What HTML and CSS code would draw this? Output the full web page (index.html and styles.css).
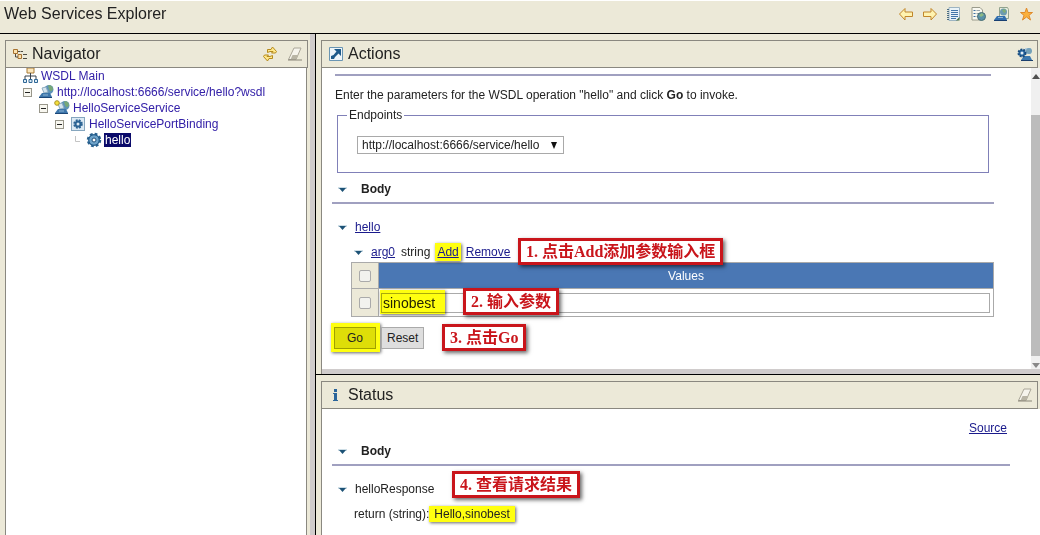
FILE: index.html
```html
<!DOCTYPE html>
<html lang="en">

<head>
    <meta charset="UTF-8">
    <meta name="viewport" content="width=device-width, initial-scale=1.0">
    <title>Web Services Explorer</title>
    <link rel="stylesheet" href="styles.css">
</head>

<body>

    <!-- Shared icons -->
    <svg class="sprite" aria-hidden="true">
        <symbol id="icon-eraser" viewBox="0 0 16 16">
            <path d="M1.500 13.500L7 2h7L9 13.500z" fill="#f6f4ec" stroke="#aaa698" />
            <path d="M5.500 9H11l-2 4.500H3.500z" fill="#b9b5a5" />
            <path d="M1 14h14" fill="none" stroke="#8a8678" />
        </symbol>
        <symbol id="icon-twisty" viewBox="0 0 9 6">
            <path d="M0 1h9" stroke="#9dbccd" />
            <path d="M1 1h7L4.500 5z" fill="#1d5276" />
        </symbol>
        <symbol id="icon-minus" viewBox="0 0 9 9">
            <rect x=".5" y=".5" width="8" height="8" fill="#f8f7f0" stroke="#98968a" />
            <path d="M2 4.500h5" stroke="#222" />
        </symbol>
        <symbol id="icon-gear" viewBox="0 0 16 16">
            <circle cx="8" cy="8" r="6" fill="#4b86b4" stroke="#28618f" stroke-width="2.500" stroke-dasharray="2.700 2" />
            <circle cx="8" cy="8" r="5.200" fill="#6ea3ca" stroke="#245b88" />
            <circle cx="8" cy="8" r="2" fill="#fff" stroke="#1f4f78" />
        </symbol>
        <symbol id="icon-service" viewBox="0 0 16 16">
            <circle cx="11" cy="5.500" r="4.500" fill="#5e93b8" />
            <path d="M10 1.500c3-1 5 1 5 4l-2 2-2-2z" fill="#77a878" />
            <path d="M4 4l4-1 2 5-4 1z" fill="#d5e5ef" stroke="#8fadc0" />
            <path d="M1 13l3-4h8l2 4z" fill="#3d76ab" />
            <path d="M1 13.500h13" stroke="#1c4778" />
            <path d="M5 11h5" stroke="#8fb6d4" />
        </symbol>
    </svg>

    <!-- Toolbar -->
    <header class="toolbar">
        <h1>Web Services Explorer</h1>
        <nav class="toolbar-icons">
            <button type="button" aria-label="Back">
                <svg viewBox="0 0 16 16"><path d="M1.500 8L7 2.500V6h7.500v4.500H7V14z" fill="#fff3b0" stroke="#c1862b" /></svg>
            </button>
            <button type="button" aria-label="Forward">
                <svg viewBox="0 0 16 16"><path d="M14.500 8L9 2.500V6H1.500v4.500H9V14z" fill="#fff3b0" stroke="#c1862b" /></svg>
            </button>
            <button type="button" aria-label="UDDI Page">
                <svg viewBox="0 0 16 16">
                    <path d="M3 1.500h10.500v11l-2.500 2H3z" fill="#e9f3f8" stroke="#9db4c2" />
                    <path d="M1 3.500h2M1 5.500h2M1 7.500h2M1 9.500h2M1 11.500h2M1 13.500h2" stroke="#4c6c82" />
                    <path d="M5 4.500h7M5 6.500h7M5 8.500h7M5 10.500h7M5 12.500h5" stroke="#4276a8" />
                    <path d="M13.500 11v3.500H10z" fill="#456f48" />
                </svg>
            </button>
            <button type="button" aria-label="WSIL Page">
                <svg viewBox="0 0 16 16">
                    <path d="M2 1.500h8l2.500 2.500v10H2z" fill="#f8f8f0" stroke="#9a9b8c" />
                    <path d="M3.500 4.500h2M3.500 7.500h2M3.500 10.500h2" stroke="#3f70a0" />
                    <path d="M6.500 4.500H10M6.500 7.500H10M6.500 10.500h2" stroke="#9aa6ac" />
                    <circle cx="11.500" cy="10.500" r="4" fill="#5a91a8" stroke="#496f75" />
                    <path d="M9 9l3-2 2 2-3 2z" fill="#8cb984" />
                </svg>
            </button>
            <button type="button" aria-label="WSDL Page">
                <svg viewBox="0 0 16 16">
                    <path d="M5.500 1.500h8l1 2v9h-9z" fill="#e8edda" stroke="#91a28e" />
                    <circle cx="9.500" cy="6" r="3.500" fill="#6b9bb1" />
                    <path d="M8 4l3-1 1 3-2 1z" fill="#7fad75" />
                    <path d="M0 14l3-4h8l2 4z" fill="#326fae" />
                    <path d="M4 11.500h5" stroke="#8fb6d4" />
                    <path d="M0 14.500h13" stroke="#173f72" />
                </svg>
            </button>
            <button type="button" aria-label="Favorites">
                <svg viewBox="0 0 16 16"><path d="M8.500 2l1.500 4.500h4.500l-3.500 2.800 1.500 4.700-4-3-4 3L6 9.300 2.500 6.500H7z" fill="#fbb03b" stroke="#e08a2b" /></svg>
            </button>
        </nav>
    </header>

    <main class="frames">

        <!-- Navigator -->
        <section class="frame navigator">
            <div class="frame-title">
                <svg class="icon" viewBox="0 0 16 16">
                    <path d="M1.500 3.500h4v4h-4zM6 8.500h3.500v4H6z" fill="#fbe3b0" stroke="#a8722f" />
                    <path d="M3.500 8v3H6M6 5.500h2M8.500 5.500H11M11 8.500h4M11 12.500h4" fill="none" stroke="#4d4a42" />
                </svg>
                <h2>Navigator</h2>
                <button type="button" aria-label="Refresh">
                    <svg viewBox="0 0 16 16">
                        <path d="M5.500 6.500V3.500H9L10.500 1l4 4.500-1 1.500H9.500L11 5.500H8z" fill="#ffe88a" stroke="#b58a1d" />
                        <path d="M10.500 9.500v3H7L5.500 15l-4-4.500 1-1.500h4L5 10.500h3z" fill="#ffe88a" stroke="#b58a1d" />
                    </svg>
                </button>
                <button type="button" aria-label="Clear">
                    <svg><use href="#icon-eraser" /></svg>
                </button>
            </div>
            <ul class="tree">
                <li>
                    <svg class="icon" viewBox="0 0 16 16">
                        <path d="M5 0h7v5H5z" fill="#fae6bd" stroke="#a87a35" />
                        <path d="M8.500 5v3M3 11V8h11v3M8.500 8v3" fill="none" stroke="#39424d" />
                        <path d="M1.500 11.500h3v3h-3zM7 11.500h3v3H7zM12.500 11.500h3v3h-3z" fill="#dcecf6" stroke="#2f6796" />
                    </svg>
                    <a href="#">WSDL Main</a>
                </li>
                <li class="level-1">
                    <svg class="fold"><use href="#icon-minus" /></svg>
                    <svg class="icon"><use href="#icon-service" /></svg>
                    <a href="#">http://localhost:6666/service/hello?wsdl</a>
                </li>
                <li class="level-2">
                    <svg class="fold"><use href="#icon-minus" /></svg>
                    <svg class="icon" viewBox="0 0 16 16">
                        <use href="#icon-service" />
                        <circle cx="3" cy="3" r="2.300" fill="#f4df3c" stroke="#a8932a" />
                    </svg>
                    <a href="#">HelloServiceService</a>
                </li>
                <li class="level-3">
                    <svg class="fold"><use href="#icon-minus" /></svg>
                    <svg class="icon" viewBox="0 0 16 16">
                        <rect x="1.500" y="1.500" width="13" height="13" fill="#dceaf4" stroke="#86a6be" />
                        <circle cx="8" cy="8" r="3.500" fill="#2c6494" stroke="#2c6494" stroke-width="2.500" stroke-dasharray="1.700 1.100" />
                        <circle cx="8" cy="8" r="1.500" fill="#dceaf4" />
                    </svg>
                    <a href="#">HelloServicePortBinding</a>
                </li>
                <li class="level-4">
                    <svg class="fold" viewBox="0 0 9 9"><path d="M4.500 0v5.500H9" fill="none" stroke="#c4c4c4" /></svg>
                    <svg class="icon"><use href="#icon-gear" /></svg>
                    <a href="#" class="selected">hello</a>
                </li>
            </ul>
        </section>

        <div class="right-frames">

            <!-- Actions -->
            <section class="frame actions">
                <div class="frame-title">
                    <svg class="icon" viewBox="0 0 16 16">
                        <path d="M1.500 1.500h13v13h-13z" fill="#eef5f9" stroke="#6a95b3" />
                        <path d="M6 3h7v7l-2.500-2.500L7 11l-1 2H3v-3l2.500-1 3-3.500z" fill="#1e5a8a" />
                    </svg>
                    <h2>Actions</h2>
                    <button type="button" aria-label="WSDL binding details">
                        <svg viewBox="0 0 16 16">
                            <path d="M8 2h6v6H8z" fill="#b8d0df" />
                            <circle cx="12" cy="5" r="3" fill="#74a0b8" />
                            <path d="M4 14l3-4h6l2 4z" fill="#3c78ae" />
                            <path d="M4 14.500h12" stroke="#1b3f6d" />
                            <circle cx="5" cy="7" r="3.500" fill="#2866a0" stroke="#174b7d" stroke-width="2" stroke-dasharray="1.800 1.100" />
                            <circle cx="5" cy="7" r="1.500" fill="#e5eff6" />
                        </svg>
                    </button>
                </div>
                <div class="scroller">
                    <form class="content">
                        <hr class="inset">
                        <p class="intro">Enter the parameters for the WSDL operation "hello" and click <b>Go</b> to invoke.</p>
                        <fieldset>
                            <legend>Endpoints</legend>
                            <span class="select">
                                <select aria-label="Endpoints">
                                    <option>http://localhost:6666/service/hello</option>
                                </select>
                                <svg viewBox="0 0 8 8"><path d="M1 0h6L4 7z" fill="#111" /></svg>
                            </span>
                        </fieldset>
                        <div class="row body-title">
                            <svg class="twisty"><use href="#icon-twisty" /></svg>
                            <b>Body</b>
                        </div>
                        <hr>
                        <div class="row operation">
                            <svg class="twisty"><use href="#icon-twisty" /></svg>
                            <a href="#">hello</a>
                        </div>
                        <div class="row argument">
                            <svg class="twisty"><use href="#icon-twisty" /></svg>
                            <a href="#">arg0</a>
                            <span>string</span>
                            <a href="#" class="mark add">Add</a>
                            <a href="#">Remove</a>
                            <span class="note note-add">1. 点击Add添加参数输入框</span>
                        </div>
                        <table>
                            <tr>
                                <th class="check"><input type="checkbox" aria-label="Select all"></th>
                                <th>Values</th>
                            </tr>
                            <tr>
                                <td class="check"><input type="checkbox" aria-label="Select row"></td>
                                <td class="value">
                                    <input type="text" value="sinobest" aria-label="Value">
                                    <span class="mark mark-value"></span>
                                    <span class="note note-value">2. 输入参数</span>
                                </td>
                            </tr>
                        </table>
                        <div class="form-buttons">
                            <span class="mark mark-go"><button type="button">Go</button></span>
                            <button type="reset">Reset</button>
                            <span class="note note-go">3. 点击Go</span>
                        </div>
                    </form>
                    <div class="scrollbar">
                        <svg viewBox="0 0 9 9"><path d="M1 7h8L5 2z" fill="#505050" /></svg>
                        <div class="thumb"></div>
                        <svg viewBox="0 0 9 9"><path d="M1 3h8L5 8z" fill="#888" /></svg>
                    </div>
                </div>
            </section>

            <!-- Status -->
            <section class="frame status">
                <div class="frame-title">
                    <svg class="icon" viewBox="0 0 16 16">
                        <path d="M6 2h3v3H6zM5 6h4v7h1v1H5v-1h1V7H5z" fill="#2b659b" />
                    </svg>
                    <h2>Status</h2>
                    <button type="button" aria-label="Clear">
                        <svg><use href="#icon-eraser" /></svg>
                    </button>
                </div>
                <div class="content">
                    <div class="source"><a href="#">Source</a></div>
                    <div class="row body-title">
                        <svg class="twisty"><use href="#icon-twisty" /></svg>
                        <b>Body</b>
                    </div>
                    <hr>
                    <div class="row response">
                        <svg class="twisty"><use href="#icon-twisty" /></svg>
                        <span>helloResponse</span>
                        <span class="note note-result">4. 查看请求结果</span>
                    </div>
                    <div class="result">return (string):<span class="mark">Hello,sinobest</span></div>
                </div>
            </section>

        </div>
    </main>

</body>

</html>
```
FILE: styles.css
```css
* {
    box-sizing: border-box;
}

body {
    margin: 0;
    height: 100vh;
    display: flex;
    flex-direction: column;
    overflow: hidden;
    background-color: #ece9d8;
    color: #222;
    font-family: "Liberation Sans", Arial, sans-serif;
    font-size: 12px;
    line-height: 16px;
}

h1,
h2 {
    margin: 0;
    font-size: 16px;
    line-height: 20px;
    font-weight: normal;
}

a {
    color: #1a1a8c;
}

button,
input,
select {
    font-family: inherit;
    font-size: 12px;
    color: #222;
}

hr {
    height: 2px;
    margin: 0;
    border: none;
    background-color: #a0a0c0;
}

.sprite {
    display: none;
}

/* Toolbar */
.toolbar {
    display: flex;
    justify-content: space-between;
    height: 34px;
    padding: 3px 6px 0 4px;
    border-top: 1px solid #fff;
    border-bottom: 1px solid #000;
}

.toolbar-icons {
    display: flex;
    gap: 8px;
    padding-top: 2px;
}

.toolbar button,
.frame-title button {
    width: 16px;
    height: 16px;
    padding: 0;
    border: none;
    background: none;
}

.toolbar svg,
.frame-title button svg {
    display: block;
    width: 16px;
    height: 16px;
}

.icon {
    flex: none;
    width: 16px;
    height: 16px;
}

/* Frames */
.frames {
    flex: 1;
    display: flex;
    min-height: 0;
}

.frame {
    display: flex;
    flex-direction: column;
    padding: 6px 0 0 5px;
}

.frame-title {
    display: flex;
    align-items: center;
    gap: 4px;
    height: 28px;
    padding: 0 4px 0 6px;
    border: 1px solid #8a8880;
    margin-right: 2px;
}

.frame-title h2 {
    flex: 1;
}

.navigator {
    flex: 0 0 316px;
    padding-right: 3px;
    border-right: 1px solid #000;
    box-shadow: inset -5px 0 #d0cccc;
}

.navigator .frame-title {
    gap: 9px;
    margin-right: 4px;
}

.navigator h2 {
    margin-left: -5px;
}

.right-frames {
    flex: 1;
    display: flex;
    flex-direction: column;
    min-width: 0;
}

/* Tree */
.tree {
    flex: 1;
    margin: 0 5px 0 0;
    padding: 0 0 0 16px;
    border: solid #8a8880;
    border-width: 0 1px;
    background-color: #fff;
    list-style: none;
}

.tree li {
    display: flex;
    align-items: center;
    gap: 2px;
    height: 16px;
}

.tree a {
    padding: 0 1px;
    line-height: 14px;
    color: #3320a8;
    text-decoration: none;
}

.tree .fold {
    width: 9px;
    height: 9px;
    margin-right: 4px;
}

.level-1 {
    margin-left: 1px;
}

.level-2 {
    margin-left: 17px;
}

.level-3 {
    margin-left: 33px;
}

.level-4 {
    margin-left: 49px;
}

.tree .selected {
    background-color: #0a0a6a;
    color: #fff;
}

/* Actions */
.actions {
    border-bottom: 1px solid #000;
}

.scroller {
    display: flex;
    padding-bottom: 5px;
    border-left: 1px solid #8a8880;
    background: linear-gradient(#d0cccc, #d0cccc) bottom / 100% 5px no-repeat #fff;
}

.content {
    flex: 1;
    background-color: #fff;
}

.actions .content {
    padding: 6px 37px 17px 10px;
}

.inset {
    margin: 0 3px;
}

.intro {
    margin: 11px 3px 4px;
}

fieldset {
    margin: 0 5px;
    padding: 13px 19px 18px;
    border: 1px solid #8080b8;
}

legend {
    margin-left: -10px;
    padding: 0 2px;
}

.select {
    display: inline-block;
    position: relative;
    height: 18px;
    vertical-align: top;
}

.select select {
    appearance: none;
    height: 18px;
    padding: 0 23px 0 4px;
    border: 1px solid #a9a9a9;
    border-radius: 0;
    background-color: #fff;
}

.select svg {
    position: absolute;
    top: 6px;
    right: 6px;
    width: 8px;
    height: 8px;
}

.row {
    display: flex;
    align-items: center;
    position: relative;
}

.twisty {
    width: 9px;
    height: 6px;
    margin: 2px 8px 0 6px;
}

.body-title {
    margin: 8px 0 5px;
}

.body-title .twisty {
    margin-right: 14px;
}

.operation {
    margin-top: 15px;
}

.argument {
    gap: 6px;
    margin: 9px 0 2px 16px;
}

.argument .twisty {
    margin-right: 2px;
}

table {
    width: calc(100% - 19px);
    margin-left: 19px;
    border-collapse: collapse;
}

th,
td {
    height: 26px;
    padding: 0;
    border: 1px solid #aaa;
}

th {
    background-color: #4a77b4;
    color: #fff;
    font-weight: normal;
}

.check {
    width: 27px;
    background-color: #ece9d8;
    text-align: center;
}

.check input {
    appearance: none;
    display: block;
    width: 12px;
    height: 12px;
    margin: 0 auto;
    border: 1px solid #aaa;
    border-radius: 2px;
    background-color: #f2f2ee;
}

.value {
    position: relative;
    height: 28px;
    padding: 0 3px 0 2px;
}

.value input {
    display: block;
    width: 100%;
    height: 20px;
    padding: 0 1px;
    border: 1px solid #aaa;
    font-size: 14px;
}

.form-buttons {
    display: flex;
    align-items: center;
    gap: 1px;
    position: relative;
    margin-top: 6px;
}

.form-buttons button {
    height: 22px;
    padding: 0 5px;
    border: 1px solid #aaa;
    background-color: #dedede;
}

.form-buttons .mark-go {
    display: flex;
    margin-left: -1px;
    padding: 4px 4px 3px 3px;
}

.mark-go button {
    width: 42px;
    border-color: #a0a000;
    background-color: #dede08;
}

/* Highlights and numbered notes */
.mark {
    padding: 1px 5px;
    background-color: #ffff10;
    box-shadow: 1px 1px 3px rgba(0, 0, 0, 0.6);
}

.add {
    margin: -1px;
    padding: 1px 2px;
}

.mark-value {
    position: absolute;
    top: 1px;
    left: 1px;
    width: 65px;
    height: 24px;
    mix-blend-mode: multiply;
}

.note {
    position: absolute;
    z-index: 1;
    padding: 0 5px;
    border: 3px solid #c9151b;
    background-color: #fff;
    box-shadow: 2px 2px 4px rgba(0, 0, 0, 0.6);
    color: #c9151b;
    font-family: "Liberation Serif", "Noto Sans CJK SC", serif;
    font-size: 16px;
    line-height: 21px;
    font-weight: bold;
    white-space: nowrap;
}

.note-add {
    top: -6px;
    left: 170px;
}

.note-value {
    top: -1px;
    left: 84px;
}

.note-go {
    top: 1px;
    left: 110px;
}

.note-result {
    top: -10px;
    left: 120px;
}

/* Scrollbar */
.scrollbar {
    display: flex;
    flex-direction: column;
    width: 9px;
    background-color: #f0f0f0;
}

.scrollbar svg {
    height: 9px;
    margin-top: 4px;
}

.thumb {
    flex: 1;
    margin-top: 34px;
    background-color: #bcbcbc;
}

/* Status */
.status {
    flex: 1;
}

.status .content {
    padding: 11px 30px 0 10px;
    border-left: 1px solid #8a8880;
}

.source {
    margin-right: 3px;
    text-align: right;
}

.status .body-title {
    margin-top: 7px;
}

.response {
    margin-top: 15px;
}

.result {
    margin: 9px 0 0 22px;
}
```
